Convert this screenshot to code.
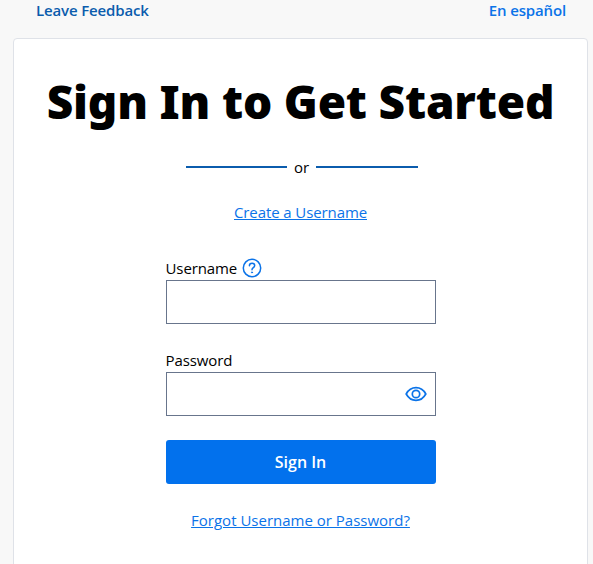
<div class="page">
  <nav class="top">
    <a href="#feedback" class="feedback">Leave Feedback</a>
    <a href="#es" class="lang">En español</a>
  </nav>
  <main class="card">
    <h1>Sign In to Get Started</h1>
    <div class="divider"><span class="line"></span><span class="or">or</span><span class="line"></span></div>
    <a class="link create" href="#create">Create a Username</a>
    <form class="form">
      <div class="field">
        <div class="label">
          <label for="username">Username</label>
          <svg class="help" width="20" height="20" viewBox="0 0 20 20" fill="none" stroke="#0b73e8" stroke-width="1.5" stroke-linecap="round" aria-hidden="true">
            <circle cx="10" cy="10" r="8.7" />
            <path d="M7.4 7.7c0-1.5 1.2-2.5 2.7-2.5s2.6 1 2.6 2.3c0 2.2-2.7 2.2-2.7 4.3" />
            <circle cx="10" cy="14.4" r=".6" fill="#0b73e8" stroke-width=".8" />
          </svg>
        </div>
        <input id="username" type="text" />
      </div>
      <div class="field">
        <div class="label"><label for="password">Password</label></div>
        <div class="pw">
          <input id="password" type="password" />
          <svg class="eye" width="22" height="18" viewBox="0 0 22 18" fill="none" stroke="#0b73e8" stroke-width="1.7" aria-hidden="true">
            <path d="M1.2 9C3.4 5 6.8 2.7 11 2.7S18.6 5 20.8 9C18.6 13 15.2 15.3 11 15.3S3.4 13 1.2 9Z" />
            <circle cx="11" cy="9" r="3.7" />
          </svg>
        </div>
      </div>
      <button type="button">Sign In</button>
    </form>
    <a class="link forgot" href="#forgot">Forgot Username or Password?</a>
  </main>
</div>

<style>
  :global(body) {
    margin: 0;
    background: #f8f8f8;
    font-family: "Open Sans", "Noto Sans", sans-serif;
    overflow: hidden;
  }
  .page {
    height: 564px;
    overflow: hidden;
    display: flex;
    flex-direction: column;
    padding: 0 5px 0 13px;
    box-sizing: border-box;
  }
  .top {
    height: 38px;
    flex: none;
    display: flex;
    justify-content: space-between;
    padding: 0 22px 0 23px;
    box-sizing: border-box;
    font-size: 15px;
    font-weight: 600;
    line-height: 21px;
    letter-spacing: -0.14px;
  }
  .top a { text-decoration: none; }
  .feedback { color: #0b5cad; }
  .lang { color: #0b73e8; }
  .card {
    flex: none;
    height: 560px;
    background: #fff;
    border: 1px solid #dfe2e8;
    border-radius: 4px;
    box-sizing: border-box;
    display: flex;
    flex-direction: column;
    align-items: center;
  }
  h1 {
    margin: 32px 0 0;
    font-family: "Noto Sans", "Open Sans", sans-serif;
    font-size: 46px;
    font-weight: 900;
    line-height: 60px;
    color: #000;
    letter-spacing: -0.2px;
    white-space: nowrap;
  }
  .divider {
    margin-top: 26px;
    padding-left: 3px;
    display: flex;
    align-items: center;
    gap: 7px;
    height: 20px;
    font-size: 15px;
    color: #000;
  }
  .line { width: 102px; height: 2px; background: #0b5cad; }
  .line:first-child { width: 101px; }
  .or { line-height: 20px; }
  .link {
    color: #0b73e8;
    font-size: 15px;
    line-height: 20px;
    text-decoration: underline;
    letter-spacing: -0.1px;
  }
  .create { margin-top: 25px; }
  .form {
    width: 270px;
    margin-top: 34px;
    display: flex;
    flex-direction: column;
  }
  .field { margin-bottom: 24px; }
  .label {
    display: flex;
    align-items: center;
    gap: 5px;
    height: 24px;
    font-size: 15px;
    color: #000;
    letter-spacing: -0.1px;
  }
  input {
    display: block;
    width: 100%;
    height: 44px;
    box-sizing: border-box;
    border: 1px solid #68758c;
    background: #fff;
    border-radius: 0;
    outline: none;
  }
  .pw { position: relative; }
  .eye { position: absolute; right: 9px; top: 13px; }
  button {
    height: 44px;
    border: 0;
    border-radius: 3px;
    background: #0271ed;
    color: #fff;
    font-family: inherit;
    font-size: 16px;
    font-weight: 600;
  }
  .forgot { margin-top: 26px; letter-spacing: 0; }
</style>
